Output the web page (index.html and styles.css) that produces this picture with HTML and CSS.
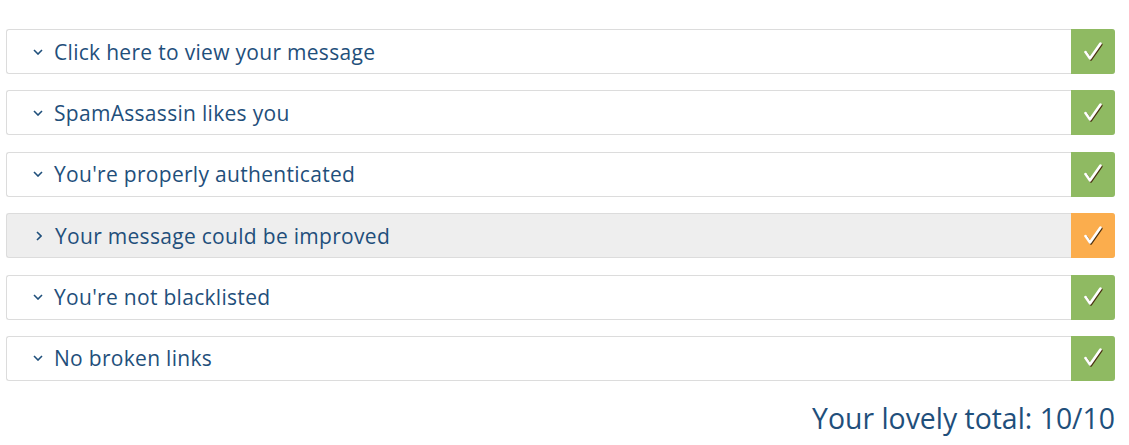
FILE: index.html
```html
<!DOCTYPE html>
<html lang="en">
<head>
  <meta charset="UTF-8" />
  <title>Mail test results</title>
  <link rel="stylesheet" href="styles.css">
</head>
<body>
  <div class="results">
    <div class="row">
      <div class="title"><svg class="chev" viewBox="0 0 10 6"><polyline points="1,1 5,5 9,1"/></svg>Click here to view your message</div>
      <div class="badge ok"><svg viewBox="0 0 20 20"><polyline class="shadow" points="3.5,11 8,17.5 18.5,2.5"/><polyline points="2.5,10 7,16.5 17.5,1.5"/></svg></div>
    </div>
    <div class="row">
      <div class="title"><svg class="chev" viewBox="0 0 10 6"><polyline points="1,1 5,5 9,1"/></svg>SpamAssassin likes you</div>
      <div class="badge ok"><svg viewBox="0 0 20 20"><polyline class="shadow" points="3.5,11 8,17.5 18.5,2.5"/><polyline points="2.5,10 7,16.5 17.5,1.5"/></svg></div>
    </div>
    <div class="row">
      <div class="title"><svg class="chev" viewBox="0 0 10 6"><polyline points="1,1 5,5 9,1"/></svg>You're properly authenticated</div>
      <div class="badge ok"><svg viewBox="0 0 20 20"><polyline class="shadow" points="3.5,11 8,17.5 18.5,2.5"/><polyline points="2.5,10 7,16.5 17.5,1.5"/></svg></div>
    </div>
    <div class="row open">
      <div class="title"><svg class="chev side" viewBox="0 0 6 10"><polyline points="1,1 5,5 1,9"/></svg>Your message could be improved</div>
      <div class="badge warn"><svg viewBox="0 0 20 20"><polyline class="shadow" points="3.5,11 8,17.5 18.5,2.5"/><polyline points="2.5,10 7,16.5 17.5,1.5"/></svg></div>
    </div>
    <div class="row">
      <div class="title"><svg class="chev" viewBox="0 0 10 6"><polyline points="1,1 5,5 9,1"/></svg>You're not blacklisted</div>
      <div class="badge ok"><svg viewBox="0 0 20 20"><polyline class="shadow" points="3.5,11 8,17.5 18.5,2.5"/><polyline points="2.5,10 7,16.5 17.5,1.5"/></svg></div>
    </div>
    <div class="row">
      <div class="title"><svg class="chev" viewBox="0 0 10 6"><polyline points="1,1 5,5 9,1"/></svg>No broken links</div>
      <div class="badge ok"><svg viewBox="0 0 20 20"><polyline class="shadow" points="3.5,11 8,17.5 18.5,2.5"/><polyline points="2.5,10 7,16.5 17.5,1.5"/></svg></div>
    </div>
    <div class="total">Your lovely total: 10/10</div>
  </div>
</body>
</html>
```
FILE: styles.css
```css
body { margin: 0; font-family: "Open Sans", "Noto Sans", sans-serif; color: #1f4f7b; background: #fff; }
.results { padding: 29px 14px 0 6px; }
.row { display: flex; height: 45px; margin-bottom: 16.4px; border: 1px solid #dcdcdc; border-right: none; border-radius: 3px; box-sizing: border-box; }
.row.open { background: #eeeeee; }
.title { flex: 1; display: flex; align-items: center; font-size: 21px; letter-spacing: 0.3px; padding-left: 26px; }
.chev { width: 10px; height: 6px; margin-right: 11px; fill: none; stroke: #1f4f7b; stroke-width: 1.6; }
.chev.side { width: 6px; height: 10px; margin-left: 3px; margin-right: 13px; }
.badge { width: 44px; margin: -1px 0; display: flex; align-items: center; justify-content: center; border-radius: 0 3px 3px 0; }
.badge.ok { background: #8fba62; }
.badge.warn { background: #fbad4d; }
.badge svg { width: 20px; height: 20px; fill: none; stroke: #fff; stroke-width: 2.6; stroke-linecap: round; stroke-linejoin: round; }
.badge svg .shadow { stroke: #4a3010; stroke-width: 2.2; }
.total { text-align: right; font-size: 28.4px; padding-top: 2px; }
```
